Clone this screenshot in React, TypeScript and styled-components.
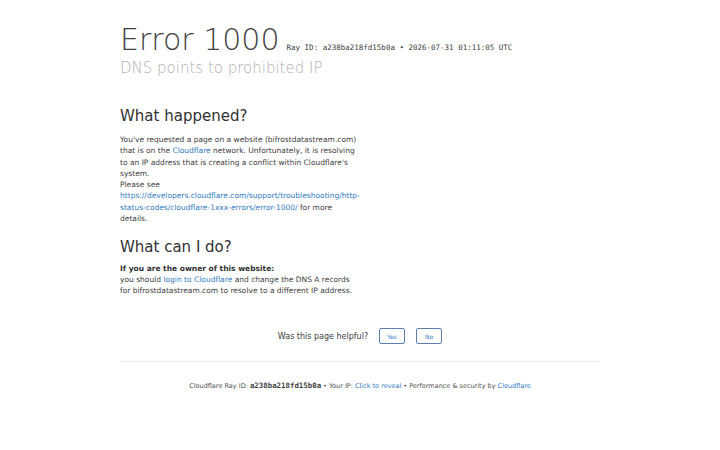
import React from 'react';
import styled, { createGlobalStyle } from 'styled-components';

const GlobalStyle = createGlobalStyle`
  html, body {
    margin: 0;
    padding: 0;
    background: #fff;
  }
  body {
    font-family: "DejaVu Sans", "Noto Sans", sans-serif;
    color: #404040;
    -webkit-font-smoothing: antialiased;
  }
`;

const Wrapper = styled.div`
  width: 480px;
  margin: 0 auto;
  padding-top: 22px;
`;

const Header = styled.header`
  margin-bottom: 28px;
`;

const Title = styled.h1`
  margin: 0;
  font-size: 30px;
  font-weight: 300;
  line-height: 1.2;
  color: #404040;
  display: flex;
  align-items: baseline;
  gap: 7px;
`;

const RayInfo = styled.span`
  font-family: "DejaVu Sans Mono", "Liberation Mono", monospace;
  font-size: 7.5px;
  font-weight: 400;
  color: #404040;
`;

const Subtitle = styled.h2`
  margin: 1px 0 0;
  font-size: 15px;
  font-weight: 300;
  line-height: 1.3;
  color: #b0b0b0;
`;

const Column = styled.section`
  width: 240px;
  margin-bottom: 14px;
`;

const SectionTitle = styled.h2<{ $gap: number }>`
  margin: 0 0 ${({ $gap }) => $gap}px;
  font-size: 15px;
  font-weight: 400;
  line-height: 1.3;
  color: #313131;
`;

const Para = styled.p`
  margin: 0;
  font-size: 7.5px;
  line-height: 1.5;
  color: #404040;
`;

const Strong = styled.strong`
  font-weight: 700;
  color: #313131;
`;

const Link = styled.a`
  color: #2f7bbf;
  text-decoration: none;
`;

const Feedback = styled.div`
  margin-top: 32px;
  display: flex;
  justify-content: center;
  align-items: center;
  gap: 11px;
  font-size: 8px;
  color: #404040;
  padding-bottom: 17px;
  border-bottom: 1px solid #eee;
`;

const FeedbackButton = styled.button`
  font-family: inherit;
  font-size: 6px;
  color: #2f7bbf;
  background: #fff;
  border: 1px solid #5c7fb0;
  border-radius: 2px;
  width: 26px;
  height: 16px;
  padding: 0;
  cursor: pointer;
`;

const Footer = styled.footer`
  margin-top: 19px;
  text-align: center;
  font-size: 6.5px;
  color: #505050;
`;

const MonoBold = styled.strong`
  font-family: "DejaVu Sans Mono", "Liberation Mono", monospace;
  font-size: 7.4px;
  font-weight: 700;
  color: #404040;
`;

const Sep = styled.span`
  margin: 0 2px;
`;

export default function App() {
  return (
    <>
      <GlobalStyle />
      <Wrapper>
        <Header>
          <Title>
            Error 1000
            <RayInfo>Ray ID: a238ba218fd15b0a &bull; 2026-07-31 01:11:05 UTC</RayInfo>
          </Title>
          <Subtitle>DNS points to prohibited IP</Subtitle>
        </Header>

        <Column>
          <SectionTitle $gap={8}>What happened?</SectionTitle>
          <Para>
            You've requested a page on a website (bifrostdatastream.com) that is on the{' '}
            <Link href="#">Cloudflare</Link> network. Unfortunately, it is resolving to an IP
            address that is creating a conflict within Cloudflare's system.
            <br />
            Please see{' '}
            <Link href="#">
              https://developers.cloudflare.com/support/troubleshooting/http-status-codes/cloudflare-1xxx-errors/error-1000/
            </Link>{' '}
            for more details.
          </Para>
        </Column>

        <Column>
          <SectionTitle $gap={5}>What can I do?</SectionTitle>
          <Para>
            <Strong>If you are the owner of this website:</Strong>
            <br />
            you should <Link href="#">login to Cloudflare</Link> and change the DNS A records for
            bifrostdatastream.com to resolve to a different IP address.
          </Para>
        </Column>

        <Feedback>
          <span>Was this page helpful?</span>
          <FeedbackButton>Yes</FeedbackButton>
          <FeedbackButton>No</FeedbackButton>
        </Feedback>

        <Footer>
          Cloudflare Ray ID: <MonoBold>a238ba218fd15b0a</MonoBold>
          <Sep>&bull;</Sep>
          Your IP: <Link href="#">Click to reveal</Link>
          <Sep>&bull;</Sep>
          Performance &amp; security by <Link href="#">Cloudflare</Link>
        </Footer>
      </Wrapper>
    </>
  );
}
